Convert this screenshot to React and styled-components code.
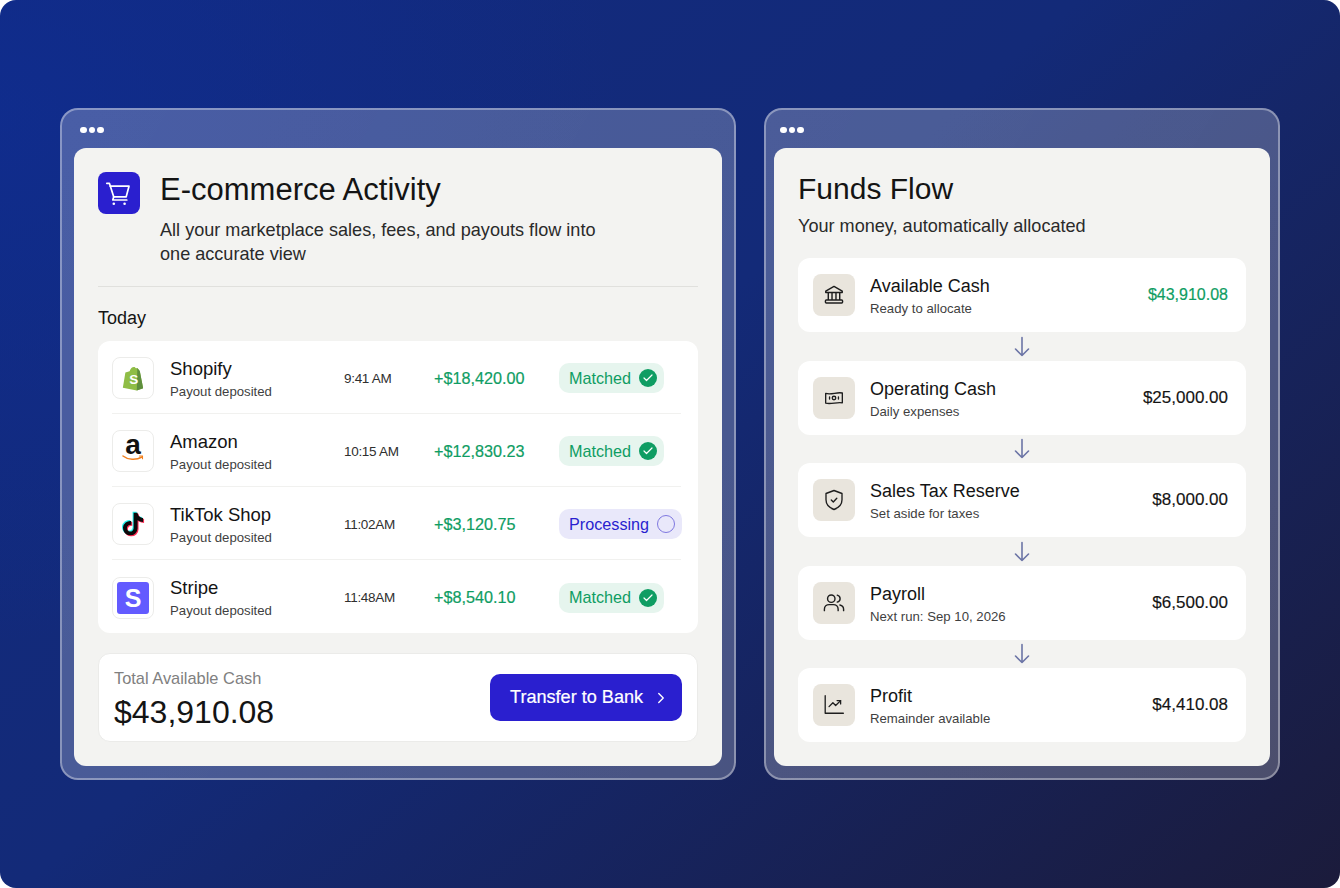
import React from "react";
import styled, { createGlobalStyle } from "styled-components";
import { ChevronRight, Check } from "lucide-react";
import { FaTiktok } from "react-icons/fa";

const GlobalStyle = createGlobalStyle`
  html, body { margin: 0; padding: 0; background: #fff; }
  body { font-family: "Liberation Sans", Arial, sans-serif; color: #141414; }
  * { box-sizing: border-box; }
`;

const Stage = styled.div`
  width: 1340px;
  height: 888px;
  border-radius: 16px;
  overflow: hidden;
  display: flex;
  align-items: center;
  justify-content: center;
  gap: 28px;
  background:
    radial-gradient(ellipse 620px 520px at 0px 120px, rgba(15, 45, 145, 0.75), rgba(15, 45, 145, 0) 100%),
    linear-gradient(140deg, #122a80 0%, #132a78 45%, #1b1b3b 100%);
`;

const Window = styled.section`
  width: ${(p) => p.$width}px;
  height: 672px;
  padding: 0 ${(p) => p.$side}px 12px;
  display: flex;
  flex-direction: column;
  border: 2px solid rgba(255, 255, 255, 0.36);
  border-radius: 18px;
  background: linear-gradient(120deg, rgba(255, 255, 255, 0.24), rgba(255, 255, 255, 0.22));
`;

const TitleBar = styled.div`
  height: 38px;
  flex: none;
  display: flex;
  align-items: center;
  gap: 2px;
  padding: 2px 6px 0;
`;

const Dot = styled.span`
  width: 6.5px;
  height: 6.5px;
  border-radius: 50%;
  background: #fff;
`;

const Card = styled.div`
  flex: 1;
  min-height: 0;
  padding: 24px;
  border-radius: 12px;
  background: #f3f3f1;
  display: flex;
  flex-direction: column;
`;

const Header = styled.header`
  display: flex;
  gap: 20px;
  padding-bottom: 20px;
  border-bottom: 1px solid #e0e0dd;
`;

const CartBadge = styled.div`
  width: 42px;
  height: 42px;
  flex: none;
  border-radius: 8px;
  background: #2a1fcf;
  color: #fff;
  display: flex;
`;

const Title = styled.h1`
  margin: ${(p) => p.$top || 0}px 0 0;
  font-size: ${(p) => p.$size}px;
  line-height: 36px;
  font-weight: 400;
  color: #141414;
`;

const Subtitle = styled.p`
  margin: ${(p) => p.$top}px 0 0;
  width: 450px;
  font-size: 18.1px;
  line-height: 24px;
  color: #2a2a2a;
`;

const Today = styled.h2`
  margin: 20px 0 12px;
  font-size: 18px;
  line-height: 22px;
  font-weight: 400;
  color: #141414;
`;

const ActivityList = styled.div`
  border-radius: 12px;
  background: #fff;
  padding: 0 17px 0 14px;
`;

const ActivityRow = styled.div`
  height: 73px;
  padding-top: 2px;
  display: grid;
  grid-template-columns: 58px 174px 90px 125px 1fr;
  align-items: center;
  border-bottom: ${(p) => (p.$last ? "none" : "1px solid #f1f1ef")};
`;

const LogoBox = styled.div`
  position: relative;
  width: 42px;
  height: 42px;
  border: 1px solid #ececea;
  border-radius: 8px;
  background: #fff;
  display: flex;
  flex-direction: column;
  align-items: center;
  justify-content: center;
  overflow: hidden;
`;

const AmazonLetter = styled.span`
  font-size: 28px;
  line-height: 20px;
  font-weight: 700;
  color: #111;
  margin-top: -5px;
`;

const TikTokLayer = styled.span`
  position: absolute;
  left: 50%;
  top: 50%;
  display: flex;
  color: ${(p) => p.$color};
  transform: translate(calc(-50% + ${(p) => p.$dx}px), calc(-50% + ${(p) => p.$dy}px));
`;

const StripeMark = styled.div`
  width: 32px;
  height: 32px;
  border-radius: 3px;
  background: #635bff;
  color: #fff;
  font-size: 25px;
  line-height: 32px;
  font-weight: 700;
  text-align: center;
`;

const Names = styled.div`
  display: flex;
  flex-direction: column;
  gap: 4px;
  padding-top: ${(p) => p.$top}px;
`;

const Name = styled.div`
  font-size: ${(p) => p.$size}px;
  line-height: 22px;
  color: #141414;
`;

const Sub = styled.div`
  font-size: 13.2px;
  line-height: 16px;
  color: #3f3f3f;
`;

const Time = styled.div`
  font-size: 13.5px;
  letter-spacing: -0.3px;
  color: #2f2f2f;
`;

const Gain = styled.div`
  font-size: 16.2px;
  -webkit-text-stroke: 0.2px #0f9d63;
  color: #0f9d63;
`;

const Status = styled.div`
  justify-self: start;
  height: 30px;
  padding: 0 7px 0 10px;
  display: flex;
  align-items: center;
  gap: 8px;
  border-radius: 10px;
  font-size: 16.2px;
  background: ${(p) => (p.$pending ? "#e9e8fa" : "#e6f5ee")};
  color: ${(p) => (p.$pending ? "#2a1fcf" : "#0f9d63")};
`;

const CheckDot = styled.span`
  width: 18px;
  height: 18px;
  border-radius: 50%;
  background: #0f9d63;
  color: #fff;
  display: flex;
  align-items: center;
  justify-content: center;
`;

const PendingRing = styled.span`
  width: 18px;
  height: 18px;
  border-radius: 50%;
  border: 1.5px solid #7f78e0;
`;

const TotalCard = styled.div`
  margin-top: 20px;
  height: 89px;
  padding: 0 15px;
  display: flex;
  align-items: center;
  justify-content: space-between;
  border: 1px solid #ebebe9;
  border-radius: 12px;
  background: #fff;
`;

const TotalText = styled.div`
  padding-top: 2px;
`;

const TotalLabel = styled.div`
  font-size: 16.4px;
  line-height: 20px;
  color: #808080;
`;

const TotalValue = styled.div`
  margin-top: 6px;
  font-size: 32px;
  line-height: 36px;
  color: #141414;
`;

const TransferButton = styled.button`
  width: 192px;
  height: 47px;
  padding: 0 0 0 20px;
  border: 0;
  border-radius: 10px;
  background: #2a1fcf;
  color: #fff;
  font: inherit;
  font-size: 18.1px;
  -webkit-text-stroke: 0.2px #fff;
  display: flex;
  align-items: center;
  gap: 9px;
`;

const FlowList = styled.div`
  margin-top: 20px;
  display: flex;
  flex-direction: column;
`;

const FlowRow = styled.div`
  height: 74px;
  padding: 0 18px 0 15px;
  display: flex;
  align-items: center;
  gap: 15px;
  border-radius: 12px;
  background: #fff;
`;

const FlowIcon = styled.div`
  width: 42px;
  height: 42px;
  flex: none;
  border-radius: 8px;
  background: #e9e5dd;
  color: #1e1e1e;
  display: flex;
  align-items: center;
  justify-content: center;
`;

const FlowAmount = styled.div`
  margin-left: auto;
  font-size: ${(p) => (p.$green ? 16 : 17)}px;
  -webkit-text-stroke: ${(p) => (p.$green ? "0.2px #0f9d63" : "0.15px #141414")};
  color: ${(p) => (p.$green ? "#0f9d63" : "#141414")};
`;

const FlowArrow = styled.div`
  height: 28.5px;
  display: flex;
  align-items: center;
  justify-content: center;
  color: #6c75a6;
`;

const CartIcon = () => (
  <svg width="42" height="42" viewBox="0 0 42 42" fill="none" stroke="currentColor" strokeWidth="1.7" strokeLinecap="round" strokeLinejoin="round">
    <path d="M8.8 11.3h2.6l4.3 13.5" />
    <path d="M12.3 14.2H31l-2.8 10.6H15.7" />
    <path d="M15.7 24.8 14.8 28h14" />
    <circle cx="15.8" cy="31.7" r="1.3" fill="currentColor" stroke="none" />
    <circle cx="26.6" cy="31.7" r="1.3" fill="currentColor" stroke="none" />
  </svg>
);

const ShopifyLogo = () => (
  <svg width="22" height="25" viewBox="0 0 26 29">
    <path d="M4 7.5 9 5.8C10 2.5 12 .8 14 .8c1.3 0 2 .8 2.5 1.7l1.6-.4L21 5.5 25 26l-7.5 2.6L1 25.5z" fill="#8fbd46" />
    <path d="M18.1 2.1 21 5.5 25 26l-7.5 2.6z" fill="#5e8e3e" />
    <text x="8.5" y="21" fontSize="16" fontWeight="700" fill="#fff" fontFamily="Liberation Sans">S</text>
  </svg>
);

const BankIcon = () => (
  <svg width="22" height="22" viewBox="0 0 20 20" fill="none" stroke="currentColor" strokeWidth="1.3" strokeLinejoin="round">
    <path d="M2.5 6.5 10 2.2l7.5 4.3v1.2h-15z" />
    <path d="M4.8 8v6.5M8.2 8v6.5M11.8 8v6.5M15.2 8v6.5" />
    <rect x="2.2" y="14.6" width="15.6" height="2.6" rx=".8" />
  </svg>
);

const CashIcon = () => (
  <svg width="20" height="20" viewBox="0 0 18 18" fill="none" stroke="currentColor" strokeWidth="1.2" strokeLinecap="round">
    <path d="M1.5 4.8c5 1.6 10-1.4 15-.3v8.8c-5-1.1-10 1.8-15 .3z" strokeLinejoin="round" />
    <circle cx="9" cy="9" r="1.6" />
    <path d="M5 8v2M13 8v2" />
  </svg>
);

const ShieldIcon = () => (
  <svg width="24" height="24" viewBox="0 0 24 24" fill="none" stroke="currentColor" strokeWidth="1.35" strokeLinecap="round" strokeLinejoin="round">
    <path d="M12 2.5 20 5.5v6.3c0 4.7-3.4 8-8 9.7-4.6-1.7-8-5-8-9.7V5.5z" />
    <path d="M9.3 12l2 2 3.5-3.7" />
  </svg>
);

const PeopleIcon = () => (
  <svg width="24" height="24" viewBox="0 0 22 22" fill="none" stroke="currentColor" strokeWidth="1.3" strokeLinecap="round">
    <circle cx="8.5" cy="7" r="3.4" />
    <path d="M2.2 18v-1.3c0-2.6 2-4.2 4.4-4.2h3.8c2.4 0 4.4 1.6 4.4 4.2V18" />
    <path d="M14 3.8c1.6.5 2.6 1.7 2.6 3.2s-1 2.7-2.6 3.2" />
    <path d="M16.4 12.8c2 .5 3.4 1.9 3.4 3.9V18" />
  </svg>
);

const ChartIcon = () => (
  <svg width="22" height="22" viewBox="0 0 20 20" fill="none" stroke="currentColor" strokeWidth="1.2" strokeLinecap="round" strokeLinejoin="round">
    <path d="M2 1.5v16h16.5" />
    <path d="M5.5 11.5 9 8l2.5 2.5L16 6" />
    <path d="M12.8 6H16v3" />
  </svg>
);

const DownArrow = () => (
  <svg width="16" height="21" viewBox="0 0 16 21" fill="none" stroke="currentColor" strokeWidth="1.6" strokeLinecap="round" strokeLinejoin="round">
    <path d="M8 1.5v18M1.5 13 8 19.5 14.5 13" />
  </svg>
);

const activity = [
  { name: "Shopify", time: "9:41 AM", amount: "+$18,420.00", logo: <ShopifyLogo /> },
  {
    name: "Amazon",
    time: "10:15 AM",
    amount: "+$12,830.23",
    logo: (
      <>
        <AmazonLetter>a</AmazonLetter>
        <svg width="22" height="7" viewBox="0 0 22 7" fill="none" stroke="#f1801f" strokeWidth="1.5" strokeLinecap="round">
          <path d="M1 1c5 4 13 4.5 19 1" />
          <path d="M17.5 1h3v2.8" strokeWidth="1.1" />
        </svg>
      </>
    ),
  },
  {
    name: "TikTok Shop",
    time: "11:02AM",
    amount: "+$3,120.75",
    pending: true,
    logo: (
      <>
        <TikTokLayer $color="#25f4ee" $dx={-1} $dy={-1}><FaTiktok size={23} /></TikTokLayer>
        <TikTokLayer $color="#fe2c55" $dx={1} $dy={1}><FaTiktok size={23} /></TikTokLayer>
        <TikTokLayer $color="#0b0b0b" $dx={0} $dy={0}><FaTiktok size={23} /></TikTokLayer>
      </>
    ),
  },
  { name: "Stripe", time: "11:48AM", amount: "+$8,540.10", logo: <StripeMark>S</StripeMark> },
];

const flows = [
  { name: "Available Cash", sub: "Ready to allocate", amount: "$43,910.08", icon: <BankIcon />, green: true },
  { name: "Operating Cash", sub: "Daily expenses", amount: "$25,000.00", icon: <CashIcon /> },
  { name: "Sales Tax Reserve", sub: "Set aside for taxes", amount: "$8,000.00", icon: <ShieldIcon /> },
  { name: "Payroll", sub: "Next run: Sep 10, 2026", amount: "$6,500.00", icon: <PeopleIcon /> },
  { name: "Profit", sub: "Remainder available", amount: "$4,410.08", icon: <ChartIcon /> },
];

const WindowDots = () => (
  <TitleBar>
    <Dot />
    <Dot />
    <Dot />
  </TitleBar>
);

export default function App() {
  return (
    <>
      <GlobalStyle />
      <Stage>
        <Window $width={676} $side={12}>
          <WindowDots />
          <Card>
            <Header>
              <CartBadge>
                <CartIcon />
              </CartBadge>
              <div>
                <Title $size={31}>E-commerce Activity</Title>
                <Subtitle $top={10}>All your marketplace sales, fees, and payouts flow into one accurate view</Subtitle>
              </div>
            </Header>
            <Today>Today</Today>
            <ActivityList>
              {activity.map((row, i) => (
                <ActivityRow key={row.name} $last={i === activity.length - 1}>
                  <LogoBox>{row.logo}</LogoBox>
                  <Names $top={1}>
                    <Name $size={18.5}>{row.name}</Name>
                    <Sub>Payout deposited</Sub>
                  </Names>
                  <Time>{row.time}</Time>
                  <Gain>{row.amount}</Gain>
                  <Status $pending={row.pending}>
                    {row.pending ? "Processing" : "Matched"}
                    {row.pending ? (
                      <PendingRing />
                    ) : (
                      <CheckDot>
                        <Check size={12} strokeWidth={2.4} />
                      </CheckDot>
                    )}
                  </Status>
                </ActivityRow>
              ))}
            </ActivityList>
            <TotalCard>
              <TotalText>
                <TotalLabel>Total Available Cash</TotalLabel>
                <TotalValue>$43,910.08</TotalValue>
              </TotalText>
              <TransferButton>
                Transfer to Bank
                <ChevronRight size={18} strokeWidth={1.8} />
              </TransferButton>
            </TotalCard>
          </Card>
        </Window>
        <Window $width={516} $side={8}>
          <WindowDots />
          <Card>
            <Title $size={30} $top={-1}>Funds Flow</Title>
            <Subtitle $top={7}>Your money, automatically allocated</Subtitle>
            <FlowList>
              {flows.map((flow, i) => (
                <React.Fragment key={flow.name}>
                  {i > 0 && (
                    <FlowArrow>
                      <DownArrow />
                    </FlowArrow>
                  )}
                  <FlowRow>
                    <FlowIcon>{flow.icon}</FlowIcon>
                    <Names $top={2}>
                      <Name $size={18}>{flow.name}</Name>
                      <Sub>{flow.sub}</Sub>
                    </Names>
                    <FlowAmount $green={flow.green}>{flow.amount}</FlowAmount>
                  </FlowRow>
                </React.Fragment>
              ))}
            </FlowList>
          </Card>
        </Window>
      </Stage>
    </>
  );
}
